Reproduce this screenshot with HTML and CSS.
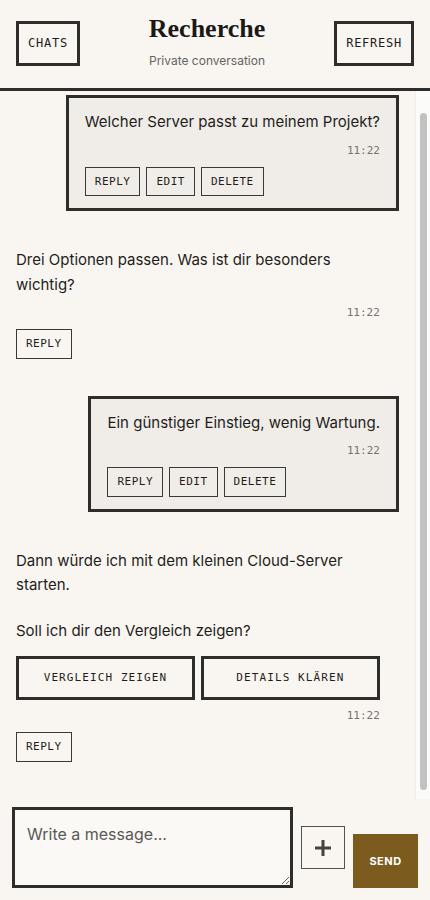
FILE: index.html
```html
<!DOCTYPE html>
<html lang="de">
<head>
<meta charset="utf-8">
<meta name="viewport" content="width=device-width, initial-scale=1">
<title>Recherche</title>
<link rel="stylesheet" href="styles.css">
</head>
<body>
<div class="app">
  <header class="topbar">
    <button class="hdr-btn" type="button">CHATS</button>
    <div class="title-block">
      <h1 class="title">Recherche</h1>
      <p class="subtitle">Private conversation</p>
    </div>
    <button class="hdr-btn" type="button">REFRESH</button>
  </header>

  <div class="thread-wrap">
    <main class="thread" id="thread">
      <article class="msg msg-user">
        <p class="msg-text">Welcher Server passt zu meinem Projekt?</p>
        <div class="msg-meta"><time>11:22</time></div>
        <div class="msg-actions">
          <button class="act-btn" type="button">REPLY</button>
          <button class="act-btn" type="button">EDIT</button>
          <button class="act-btn" type="button">DELETE</button>
        </div>
      </article>

      <article class="msg msg-bot">
        <p class="msg-text">Drei Optionen passen. Was ist dir besonders wichtig?</p>
        <div class="msg-meta"><time>11:22</time></div>
        <div class="msg-actions">
          <button class="act-btn" type="button">REPLY</button>
        </div>
      </article>

      <article class="msg msg-user">
        <p class="msg-text">Ein günstiger Einstieg, wenig Wartung.</p>
        <div class="msg-meta"><time>11:22</time></div>
        <div class="msg-actions">
          <button class="act-btn" type="button">REPLY</button>
          <button class="act-btn" type="button">EDIT</button>
          <button class="act-btn" type="button">DELETE</button>
        </div>
      </article>

      <article class="msg msg-bot">
        <p class="msg-text">Dann würde ich mit dem kleinen Cloud-Server starten.</p>
        <p class="msg-text msg-para">Soll ich dir den Vergleich zeigen?</p>
        <div class="choices">
          <button class="choice-btn" type="button">VERGLEICH ZEIGEN</button>
          <button class="choice-btn" type="button">DETAILS KLÄREN</button>
        </div>
        <div class="msg-meta"><time>11:22</time></div>
        <div class="msg-actions">
          <button class="act-btn" type="button">REPLY</button>
        </div>
      </article>
    </main>
    <div class="scroll-track" aria-hidden="true"><div class="scroll-thumb"></div></div>
  </div>

  <form class="composer">
    <textarea class="input" placeholder="Write a message..."></textarea>
    <button class="attach" type="button" aria-label="Add">
      <svg width="18" height="18" viewBox="0 0 18 18"><path d="M9 1v16M1 9h16" stroke="#454340" stroke-width="3" fill="none"/></svg>
    </button>
    <button class="send" type="button">SEND</button>
  </form>
</div>
<script src="main.js"></script>
</body>
</html>
```

FILE: styles.css
```css
* { box-sizing: border-box; }

html, body {
  margin: 0;
  padding: 0;
  height: 100%;
}

body {
  background: #f9f6f1;
  color: #1f1d1b;
  font-family: Inter, "Noto Sans", sans-serif;
}

.app {
  height: 100vh;
  display: flex;
  flex-direction: column;
}

.topbar {
  flex: none;
  height: 91px;
  display: flex;
  align-items: center;
  justify-content: space-between;
  padding: 0 16px;
  border-bottom: 3px solid #2f2d2a;
}

.hdr-btn {
  height: 45px;
  padding: 0 9px;
  border: 3px solid #2f2d2a;
  background: transparent;
  color: #1f1d1b;
  font-family: "DejaVu Sans Mono", monospace;
  font-size: 12px;
  letter-spacing: 0.75px;
  margin-bottom: 2px;
}

.title-block {
  text-align: center;
  padding-bottom: 5px;
}

.title {
  margin: 0;
  font-family: "Liberation Serif", serif;
  font-weight: 700;
  font-size: 26px;
  line-height: 32px;
  color: #1b1917;
}

.subtitle {
  margin: 7px 0 0;
  font-size: 12px;
  line-height: 18px;
  color: #666360;
}

.thread-wrap {
  flex: 1;
  min-height: 0;
  display: flex;
}

.thread {
  flex: 1;
  min-width: 0;
  overflow-y: auto;
  display: flex;
  flex-direction: column;
  gap: 37px;
  padding: 16px 16px 37px;
}

.scroll-track {
  flex: none;
  width: 15px;
  display: flex;
  padding: 22px 3px 9px 4px;
  background: #fbfbfa;
  border-left: 1px solid #efeeeb;
}

.scroll-thumb {
  flex: 1;
  background: #c2c2c2;
  border-radius: 4px;
}

.msg { flex: none; }

.msg-user {
  align-self: flex-end;
  max-width: 88%;
  border: 3px solid #2f2d2a;
  background: #f0ede8;
  padding: 12px 16px 12px;
}

.msg-bot {
  width: 95%;
}

.msg-text {
  margin: 0;
  font-size: 15px;
  line-height: 24.5px;
}

.msg-para { margin-top: 21.5px; }

.msg-meta {
  margin-top: 8px;
  text-align: right;
  font-family: "DejaVu Sans Mono", monospace;
  font-size: 11px;
  line-height: 16px;
  color: #77736e;
}

.msg-actions {
  margin-top: 8px;
  display: flex;
  gap: 6px;
}

.act-btn {
  height: 29.5px;
  padding: 0 9px;
  border: 1px solid #3b3936;
  background: transparent;
  color: #1f1d1b;
  font-family: "DejaVu Sans Mono", monospace;
  font-size: 11px;
  letter-spacing: 0.5px;
}

.choices {
  margin: 12px 0 2px;
  display: grid;
  grid-template-columns: 1fr 1fr;
  gap: 6px;
}

.choice-btn {
  height: 44.5px;
  border: 3px solid #2f2d2a;
  background: transparent;
  color: #1f1d1b;
  font-family: "DejaVu Sans Mono", monospace;
  font-size: 11px;
  letter-spacing: 1.1px;
}

.composer {
  flex: none;
  margin: 0;
  display: flex;
  align-items: center;
  gap: 8px;
  padding: 8px 12px 12px;
}

.input {
  flex: 1;
  min-width: 0;
  height: 81px;
  border: 3px solid #2f2d2a;
  background: #fbf9f5;
  padding: 12px;
  font-family: Inter, "Noto Sans", sans-serif;
  font-size: 16px;
  line-height: 24px;
  color: #1f1d1b;
  resize: vertical;
  border-radius: 0;
}

.input::placeholder { color: #5b5855; }

.attach {
  width: 44px;
  height: 43px;
  padding: 0;
  border: 1px solid #55524e;
  background: transparent;
  display: flex;
  align-items: center;
  justify-content: center;
}

.send {
  align-self: flex-end;
  width: 65px;
  height: 54px;
  padding: 0;
  border: none;
  background: #7b5c1e;
  color: #ffffff;
  font-family: Inter, "Noto Sans", sans-serif;
  font-weight: 700;
  font-size: 11px;
  letter-spacing: 0.5px;
}
```

FILE: main.js
```js
var thread = document.getElementById('thread');
thread.scrollTop = thread.scrollHeight;
```
